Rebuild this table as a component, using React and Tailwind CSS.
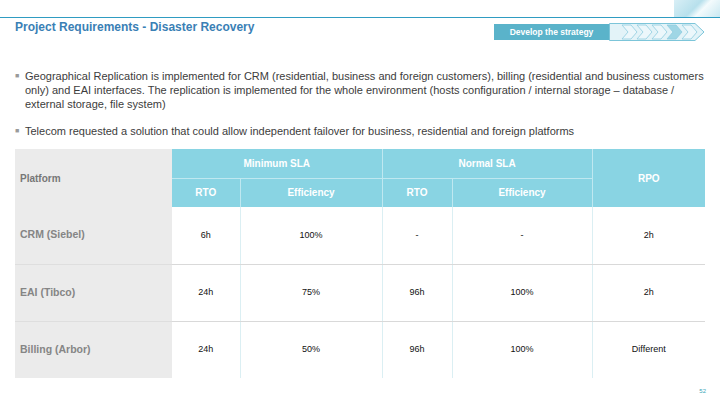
import React from 'react';

const rows = [
  { name: 'CRM (Siebel)', vals: ['6h', '100%', '-', '-', '2h'] },
  { name: 'EAI (Tibco)', vals: ['24h', '75%', '96h', '100%', '2h'] },
  { name: 'Billing (Arbor)', vals: ['24h', '50%', '96h', '100%', 'Different'] },
];

function StrategyArrow() {
  // outlined arrow with chevrons, 4th one highlighted
  const chevrons = [0, 1, 2, 3, 4];
  return (
    <svg width="96" height="18" viewBox="0 0 96 18">
      <path d="M0.5 0.5 H86 L95 9 L86 17.5 H0.5 Z" fill="#e3f3f8" stroke="#7cc5d9" />
      {chevrons.map((i) => {
        const x = 13 + i * 15;
        return (
          <path
            key={i}
            d={`M${x} 2 H${x + 9} L${x + 15} 9 L${x + 9} 16 H${x} L${x + 6} 9 Z`}
            fill={i === 3 ? '#9fd6e5' : '#ecf7fb'}
            stroke="#8fcde0"
            strokeWidth="0.8"
          />
        );
      })}
    </svg>
  );
}

export default function App() {
  return (
    <div className="w-[720px] h-[405px] bg-white font-['Liberation_Sans',Arial,sans-serif] relative overflow-hidden">
      {/* top rule + corner decoration */}
      <div className="h-[18px] border-b border-[#2f9cc2] flex justify-end">
        <div className="w-[46px] h-[17px] bg-[linear-gradient(135deg,#d9eff6_0%,#b7e0ec_45%,#f4fbfd_60%,#c9e8f1_100%)]" />
      </div>

      <div className="flex justify-between items-start px-[15px]">
        <h1 className="mt-[2px] text-[12px] font-bold text-[#3a80b5] leading-[15px]">
          Project Requirements - Disaster Recovery
        </h1>
        <div className="flex items-center mt-[5px]">
          <div className="w-[115px] h-[16px] bg-[#5ab3ca] text-white text-[8.5px] font-bold flex items-center justify-center">
            Develop the strategy
          </div>
          <StrategyArrow />
        </div>
      </div>

      <ul className="mt-[28px] pl-[15px] pr-[12px] text-[11px] leading-[14px] text-[#3c3c3c] flex flex-col gap-[13px]">
        <li className="flex">
          <span className="w-[10px] shrink-0 text-[#9a9a9a] text-[7px]">■</span>
          <span>
            Geographical Replication is implemented for CRM (residential, business and foreign customers), billing (residential and business customers only) and EAI interfaces. The replication is implemented for the whole environment (hosts configuration / internal storage – database / external storage, file system)
          </span>
        </li>
        <li className="flex">
          <span className="w-[10px] shrink-0 text-[#9a9a9a] text-[7px]">■</span>
          <span>Telecom requested a solution that could allow independent failover for business, residential and foreign platforms</span>
        </li>
      </ul>

      <table className="mt-[11px] ml-[15px] w-[690px] border-collapse table-fixed">
        <colgroup>
          <col className="w-[157px]" />
          <col className="w-[68px]" />
          <col className="w-[142px]" />
          <col className="w-[70px]" />
          <col className="w-[140px]" />
          <col className="w-[113px]" />
        </colgroup>
        <thead>
          <tr className="h-[29px]">
            <th rowSpan={2} className="bg-[#ebebeb] text-left pl-[5px] text-[10px] font-bold text-[#777]">
              Platform
            </th>
            <th colSpan={2} className="bg-[#89d4e3] text-white text-[10px] font-bold border-b border-r border-[#bfe8f0]">
              Minimum SLA
            </th>
            <th colSpan={2} className="bg-[#89d4e3] text-white text-[10px] font-bold border-b border-r border-[#bfe8f0]">
              Normal SLA
            </th>
            <th rowSpan={2} className="bg-[#89d4e3] text-white text-[10px] font-bold">
              RPO
            </th>
          </tr>
          <tr className="h-[29px]">
            {['RTO', 'Efficiency', 'RTO', 'Efficiency'].map((h, i) => (
              <th key={i} className="bg-[#89d4e3] text-white text-[10px] font-bold border-r border-[#bfe8f0]">
                {h}
              </th>
            ))}
          </tr>
        </thead>
        <tbody>
          {rows.map((r, ri) => (
            <tr key={r.name} className="h-[57px]">
              <td
                className={`bg-[#ebebeb] pl-[5px] text-[10.5px] font-bold text-[#858585] ${
                  ri < rows.length - 1 ? 'border-b border-[#dedede]' : ''
                }`}
              >
                {r.name}
              </td>
              {r.vals.map((v, vi) => (
                <td
                  key={vi}
                  className={`text-center text-[9px] text-[#111] ${vi < 4 ? 'border-r border-[#dbeff3]' : ''} ${
                    ri < rows.length - 1 ? 'border-b border-b-[#d9d9d9]' : ''
                  }`}
                >
                  {v}
                </td>
              ))}
            </tr>
          ))}
        </tbody>
      </table>

      <div className="absolute right-[14px] bottom-[9px] text-[6px] text-[#3aa6b8]">52</div>
    </div>
  );
}
